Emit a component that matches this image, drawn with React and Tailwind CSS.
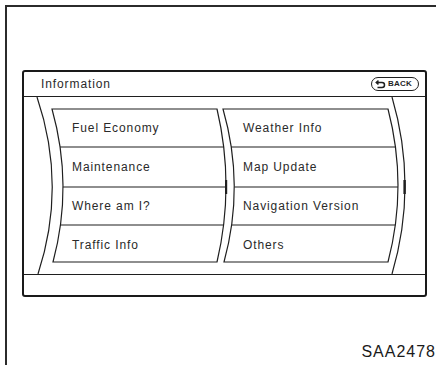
import React from 'react';

const font = { fontFamily: '"Liberation Sans", Arial, sans-serif' };

const LEFT_ITEMS = ['Fuel Economy', 'Maintenance', 'Where am I?', 'Traffic Info'];
const RIGHT_ITEMS = ['Weather Info', 'Map Update', 'Navigation Version', 'Others'];

const itemText = 'text-[12px] tracking-[0.9px] text-[#2a2a2a] leading-none';

// curved outlines of the drum-like menu, page coordinates
const ScreenLines = () => (
  <svg
    className="absolute inset-0 pointer-events-none"
    width="401"
    height="177"
    viewBox="24 97 401 177"
    fill="none"
    stroke="#1f1f1f"
    strokeWidth="1.2"
  >
    {/* outer arcs */}
    <path d="M37 97 Q67 185.5 38 274" />
    <path d="M392 97 Q418 185.5 392 274" />
    <path d="M404.6 180 L404.6 194" strokeWidth="2.4" />

    {/* left panel */}
    <path d="M52 109 L217 109 Q235 185.5 217 262 L53 262 Q73.5 185.5 52 109 Z" />
    <path d="M60.1 147 L223.7 147" />
    <path d="M62.9 187 L226 187" />
    <path d="M60.5 225 L223.6 225" />
    <path d="M226.1 180 L226.1 194" strokeWidth="2.2" />

    {/* right panel */}
    <path d="M223 109 L388 109 Q408 185.5 388 262 L224 262 Q245 185.5 223 109 Z" />
    <path d="M231.3 147 L395.5 147" />
    <path d="M234.3 187 L398 187" />
    <path d="M231.7 225 L395.3 225" />
  </svg>
);

const BackButton = () => (
  <div className="flex h-[14px] w-[48px] items-center gap-[2px] rounded-full border-[1.5px] border-[#1f1f1f] pl-[3px]">
    <svg width="11" height="9" viewBox="0 0 11 9" fill="none" stroke="#1f1f1f" strokeWidth="1.5">
      <path d="M1.5 2.5 H7 A2.5 2.5 0 0 1 7 7.5 H2.5" />
      <path d="M3.5 0.6 L1.3 2.5 L3.5 4.4" />
    </svg>
    <span className="text-[8px] font-bold leading-none tracking-[0.2px] text-[#1f1f1f]">BACK</span>
  </div>
);

const Column = ({ items }) => (
  <div className="flex flex-col">
    {items.map((label) => (
      <div key={label} className="mb-px flex h-[38px] items-center">
        <span className={itemText}>{label}</span>
      </div>
    ))}
  </div>
);

export default function App() {
  return (
    <div className="relative h-[365px] w-[436px] overflow-hidden bg-white" style={font}>
      <div className="ml-[5px] mt-[5px] h-[400px] border-l-2 border-t-2 border-[#2b2b2b] pl-[15px] pt-[63px]">
        <div className="w-[405px] rounded-[3px] border-2 border-[#1a1a1a]">
          <div className="flex h-[25px] items-center justify-between border-b border-[#1f1f1f] pl-[17px] pr-[6px]">
            <span className={itemText}>Information</span>
            <BackButton />
          </div>
          <div className="relative h-[177px]">
            <ScreenLines />
            <div className="grid grid-cols-[171px_1fr] pl-[48px] pt-[12px]">
              <Column items={LEFT_ITEMS} />
              <Column items={RIGHT_ITEMS} />
            </div>
          </div>
          <div className="h-[21px] border-t border-[#1f1f1f]" />
        </div>
      </div>
      <div className="absolute bottom-[5px] right-0 text-[16px] leading-none tracking-[1px] text-[#1a1a1a]">
        SAA2478
      </div>
    </div>
  );
}
